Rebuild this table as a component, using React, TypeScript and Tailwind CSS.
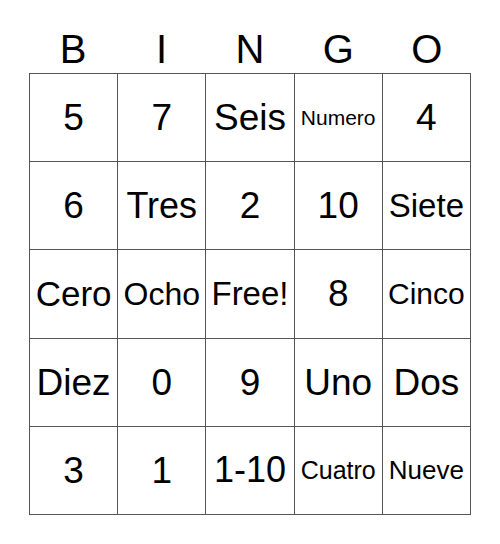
const letters = ["B", "I", "N", "G", "O"];

// each cell: label + font size that fits the square
const cells: { label: string; size: string }[] = [
  { label: "5", size: "text-[37px]" },
  { label: "7", size: "text-[37px]" },
  { label: "Seis", size: "text-[37px]" },
  { label: "Numero", size: "text-[21px]" },
  { label: "4", size: "text-[37px]" },
  { label: "6", size: "text-[37px]" },
  { label: "Tres", size: "text-[36px]" },
  { label: "2", size: "text-[37px]" },
  { label: "10", size: "text-[37px]" },
  { label: "Siete", size: "text-[33px]" },
  { label: "Cero", size: "text-[35px]" },
  { label: "Ocho", size: "text-[32px]" },
  { label: "Free!", size: "text-[33px]" },
  { label: "8", size: "text-[37px]" },
  { label: "Cinco", size: "text-[30px]" },
  { label: "Diez", size: "text-[37px]" },
  { label: "0", size: "text-[37px]" },
  { label: "9", size: "text-[37px]" },
  { label: "Uno", size: "text-[37px]" },
  { label: "Dos", size: "text-[37px]" },
  { label: "3", size: "text-[37px]" },
  { label: "1", size: "text-[37px]" },
  { label: "1-10", size: "text-[36px]" },
  { label: "Cuatro", size: "text-[25px]" },
  { label: "Nueve", size: "text-[26px]" },
];

export default function App() {
  return (
    <div className="w-[500px] h-[544px] bg-white text-black pl-[29px] font-['Liberation_Sans',Arial,sans-serif]">
      <div className="grid grid-cols-5 w-[442px] h-[73px] pt-[29px]">
        {letters.map((l) => (
          <div key={l} className="text-center text-[40px] leading-none">
            {l}
          </div>
        ))}
      </div>
      <div className="grid grid-cols-5 grid-rows-5 w-[442px] h-[442px] border-l border-t border-[#555]">
        {cells.map((c, i) => (
          <div
            key={i}
            className={`flex items-center justify-center border-r border-b border-[#555] leading-none whitespace-nowrap ${c.size}`}
          >
            {c.label}
          </div>
        ))}
      </div>
    </div>
  );
}
